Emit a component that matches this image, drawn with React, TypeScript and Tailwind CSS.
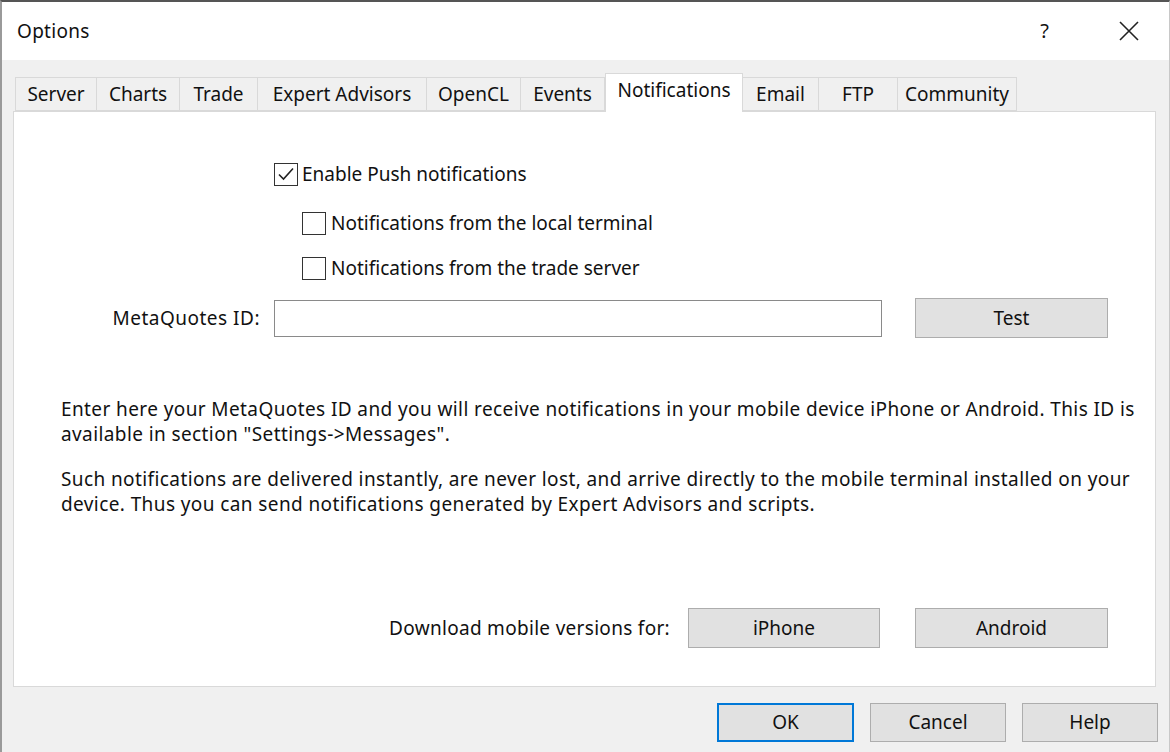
import React from 'react';

const tabs = [
  { label: 'Server', w: 'w-[82px]' },
  { label: 'Charts', w: 'w-[83px]' },
  { label: 'Trade', w: 'w-[78px]' },
  { label: 'Expert Advisors', w: 'w-[169px]' },
  { label: 'OpenCL', w: 'w-[94px]' },
  { label: 'Events', w: 'w-[84px]' },
  { label: 'Notifications', w: 'w-[138px]', active: true },
  { label: 'Email', w: 'w-[76px]' },
  { label: 'FTP', w: 'w-[79px]' },
  { label: 'Community', w: 'w-[119px]' },
];

function CheckBox({ checked }: { checked?: boolean }) {
  return (
    <div className="w-[24px] h-[23px] border border-[#333333] bg-white flex items-center justify-center shrink-0">
      {checked && (
        <svg width="18" height="16" viewBox="0 0 18 16" fill="none">
          <path d="M2 8.5 L6.5 13 L16 2.5" stroke="#222" strokeWidth="1.6" />
        </svg>
      )}
    </div>
  );
}

function Button({ label, className }: { label: string; className: string }) {
  return (
    <button className={`bg-[#e1e1e1] border border-[#adadad] text-[19px] text-[#111] flex items-center justify-center ${className}`}>
      {label}
    </button>
  );
}

export default function App() {
  return (
    <div className="w-[1170px] h-[752px] bg-[#f0f0f0] border-t-2 border-t-[#555555] border-l-2 border-l-[#9a9a9a] border-r border-r-[#c8c8c8] flex flex-col font-['Noto_Sans','Open_Sans',sans-serif] text-[#111]">
      {/* title bar */}
      <div className="h-[58px] bg-white flex items-center shrink-0">
        <span className="ml-[15px] text-[19px] tracking-[0.3px]">Options</span>
        <span className="ml-auto mr-[70px] text-[20px]">?</span>
        <svg className="mr-[30px]" width="20" height="20" viewBox="0 0 20 20">
          <path d="M1 1 L19 19 M19 1 L1 19" stroke="#222" strokeWidth="1.6" />
        </svg>
      </div>

      {/* tabs */}
      <div className="flex items-end pl-[13px] mt-[13px] h-[38px] relative z-10">
        {tabs.map((t) =>
          t.active ? (
            <div
              key={t.label}
              className={`${t.w} h-[39px] -mb-[1px] bg-white border border-[#d9d9d9] border-b-0 flex items-start justify-center pt-[2px] text-[19px]`}
            >
              {t.label}
            </div>
          ) : (
            <div
              key={t.label}
              className={`${t.w} h-[34px] bg-[#f0f0f0] border border-[#d9d9d9] border-l-0 first:border-l flex items-center justify-center text-[19px]`}
            >
              {t.label}
            </div>
          )
        )}
      </div>

      {/* panel */}
      <div className="ml-[11px] w-[1143px] h-[576px] bg-white border border-[#d9d9d9] flex flex-col shrink-0 text-[19px]">
        <div className="flex items-center mt-[50px] pl-[260px] h-[24px]">
          <CheckBox checked />
          <span className="ml-[4px]">Enable Push notifications</span>
        </div>
        <div className="flex items-center mt-[26px] pl-[288px] h-[23px]">
          <CheckBox />
          <span className="ml-[5px]">Notifications from the local terminal</span>
        </div>
        <div className="flex items-center mt-[22px] pl-[288px] h-[23px]">
          <CheckBox />
          <span className="ml-[5px]">Notifications from the trade server</span>
        </div>

        <div className="flex items-center mt-[18px] h-[40px]">
          <div className="w-[246px] text-right tracking-[0.5px]">MetaQuotes ID:</div>
          <div className="ml-[14px] w-[608px] h-[37px] border border-[#8a8a8a] bg-white" />
          <Button label="Test" className="ml-[33px] w-[193px] h-[40px]" />
        </div>

        <p className="mt-[59px] pl-[47px] leading-[25px] tracking-[0.4px] whitespace-nowrap">
          Enter here your MetaQuotes ID and you will receive notifications in your mobile device iPhone or Android. This ID is
          <br />
          available in section "Settings-&gt;Messages".
        </p>
        <p className="mt-[20px] pl-[47px] leading-[25px] tracking-[0.4px] whitespace-nowrap">
          Such notifications are delivered instantly, are never lost, and arrive directly to the mobile terminal installed on your
          <br />
          device. Thus you can send notifications generated by Expert Advisors and scripts.
        </p>

        <div className="flex items-center justify-end mt-auto mb-[38px] mr-[47px] h-[40px]">
          <span className="tracking-[0.3px]">Download mobile versions for:</span>
          <Button label="iPhone" className="ml-[18px] w-[192px] h-[40px]" />
          <Button label="Android" className="ml-[35px] w-[193px] h-[40px]" />
        </div>
      </div>

      {/* footer buttons */}
      <div className="flex justify-end gap-[16px] mt-[16px] mr-[11px]">
        <button className="w-[137px] h-[39px] bg-[#e1e1e1] border-2 border-[#0078d7] text-[19px] flex items-center justify-center">OK</button>
        <Button label="Cancel" className="w-[136px] h-[39px]" />
        <Button label="Help" className="w-[136px] h-[39px]" />
      </div>
    </div>
  );
}
